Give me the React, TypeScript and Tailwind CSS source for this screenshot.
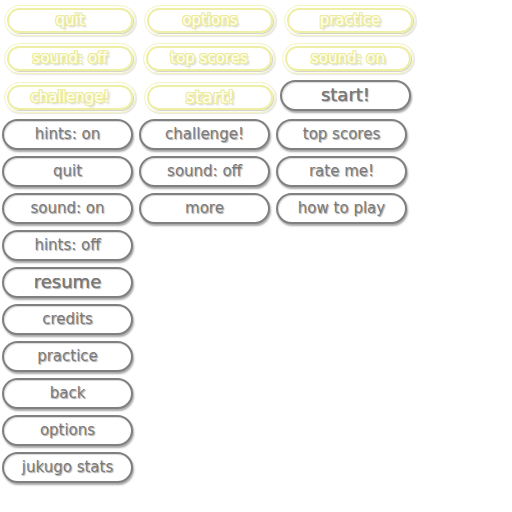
import React from "react";

const FONT = "'DejaVu Sans', 'Liberation Sans', sans-serif";

function GreyButton({ label, big }: { label: string; big?: boolean }) {
  return (
    <div
      className="w-[131px] h-[31px] rounded-full border-2 border-[#808080] bg-white flex items-center justify-center shadow-[1px_2px_2px_rgba(0,0,0,0.35),inset_1px_1px_1px_rgba(0,0,0,0.15)]"
      style={{ fontFamily: FONT }}
    >
      <span
        className={
          (big ? "text-[18px] [text-shadow:0_0_0.6px_#7a7a7a,1px_1px_1px_rgba(0,0,0,0.35)] " : "text-[15px] [text-shadow:1px_1px_1px_rgba(0,0,0,0.35)] ") +
          "leading-none text-[#7a7a7a] -mt-[1px]"
        }
      >
        {label}
      </span>
    </div>
  );
}

function YellowButton({ label, big }: { label: string; big?: boolean }) {
  return (
    <div className="w-[132px] h-[31px] rounded-full border border-[#f4f4c0] bg-white p-[2px] shadow-[1px_1px_1px_rgba(0,0,0,0.1)]">
      <div
        className="w-full h-full rounded-full border-2 border-[#eeeea4] flex items-center justify-center shadow-[1px_1px_1px_rgba(120,120,80,0.35)]"
        style={{ fontFamily: FONT }}
      >
        <span
          className={
            (big ? "text-[18px] " : "text-[15px] ") +
            "leading-none text-[#fffff6] -mt-[1px] [text-shadow:1px_0_0_#ecec9c,-1px_0_0_#ecec9c,0_1px_0_#ecec9c,0_-1px_0_#ecec9c,1px_1px_0_#ecec9c,-1px_-1px_0_#ecec9c,1px_-1px_0_#ecec9c,-1px_1px_0_#ecec9c,2px_2px_2px_rgba(110,110,70,0.4)]"
          }
        >
          {label}
        </span>
      </div>
    </div>
  );
}

export default function App() {
  return (
    <div className="w-[512px] h-[512px] bg-white overflow-hidden">
      <div className="pt-[5px] pl-[4px] flex flex-col gap-[7px]">
        <div className="flex gap-[8px]">
          <YellowButton label="quit" />
          <YellowButton label="options" />
          <YellowButton label="practice" />
        </div>
        <div className="flex gap-[7px]">
          <YellowButton label="sound: off" />
          <YellowButton label="top scores" />
          <YellowButton label="sound: on" />
        </div>
        <div className="flex items-start gap-[8px]">
          <div className="mt-[1px]">
            <YellowButton label="challenge!" />
          </div>
          <div className="mt-[1px]">
            <YellowButton label="start!" big />
          </div>
          <div className="-mt-[1px] -ml-[4px]">
            <GreyButton label="start!" big />
          </div>
        </div>
      </div>
      <div className="mt-[6px] pl-[2px] flex gap-[6px] items-start">
        <div className="flex flex-col gap-[6px]">
          <GreyButton label="hints: on" />
          <GreyButton label="quit" />
          <GreyButton label="sound: on" />
          <GreyButton label="hints: off" />
          <GreyButton label="resume" big />
          <GreyButton label="credits" />
          <GreyButton label="practice" />
          <GreyButton label="back" />
          <GreyButton label="options" />
          <GreyButton label="jukugo stats" />
        </div>
        <div className="flex flex-col gap-[6px]">
          <GreyButton label="challenge!" />
          <GreyButton label="sound: off" />
          <GreyButton label="more" />
        </div>
        <div className="flex flex-col gap-[6px]">
          <GreyButton label="top scores" />
          <GreyButton label="rate me!" />
          <GreyButton label="how to play" />
        </div>
      </div>
    </div>
  );
}
